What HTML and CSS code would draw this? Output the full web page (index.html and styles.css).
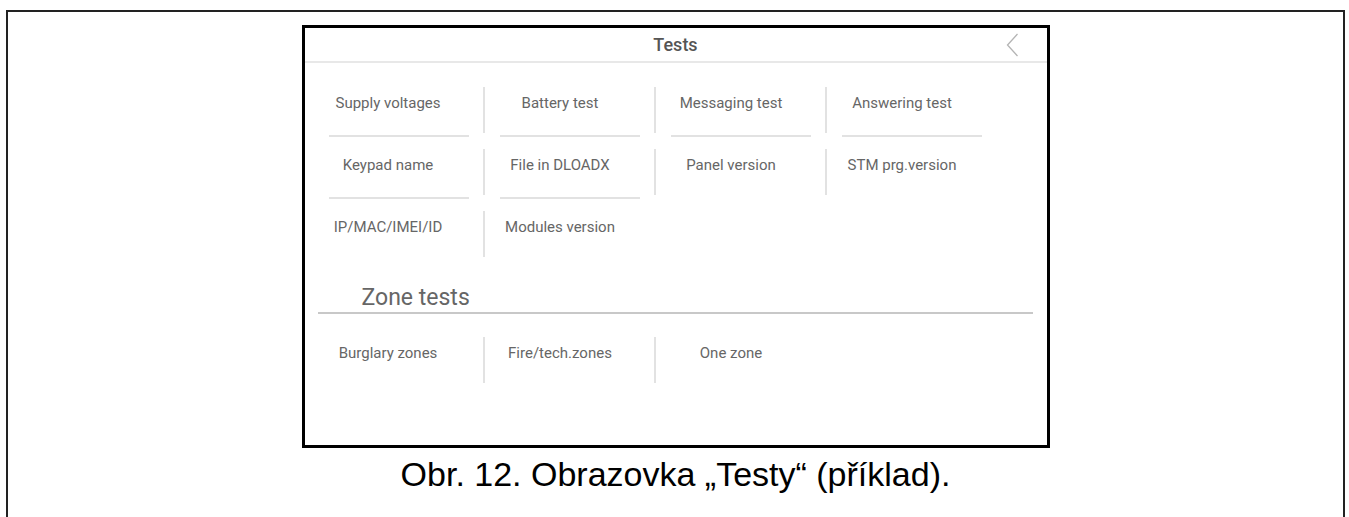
FILE: index.html
```html
<!DOCTYPE html>
<html lang="cs">

<head>
	<meta charset="UTF-8">
	<meta name="viewport" content="width=device-width, initial-scale=1.0">
	<title>Testy</title>
	<link rel="stylesheet" href="styles.css">
</head>

<body>
	<div class="page">
		<div class="screen">
			<div class="screen-head">
				<span class="title">Tests</span>
				<svg class="back" width="13" height="24" viewBox="0 0 13 24">
					<polyline points="11.5,1 1.5,12 11.5,23" fill="none" stroke="#b4b4b4" stroke-width="1.3" />
				</svg>
			</div>

			<div class="grid">
				<div class="cell"><div class="cell-body">Supply voltages</div><div class="cell-line"></div></div>
				<div class="cell"><div class="cell-body sep">Battery test</div><div class="cell-line"></div></div>
				<div class="cell"><div class="cell-body sep">Messaging test</div><div class="cell-line"></div></div>
				<div class="cell"><div class="cell-body sep">Answering test</div><div class="cell-line"></div></div>

				<div class="cell"><div class="cell-body">Keypad name</div><div class="cell-line"></div></div>
				<div class="cell"><div class="cell-body sep">File in DLOADX</div><div class="cell-line"></div></div>
				<div class="cell"><div class="cell-body sep">Panel version</div><div class="cell-line none"></div></div>
				<div class="cell"><div class="cell-body sep">STM prg.version</div><div class="cell-line none"></div></div>

				<div class="cell"><div class="cell-body">IP/MAC/IMEI/ID</div><div class="cell-line none"></div></div>
				<div class="cell"><div class="cell-body sep">Modules version</div><div class="cell-line none"></div></div>
			</div>

			<div class="section">Zone tests</div>

			<div class="grid zones">
				<div class="cell"><div class="cell-body">Burglary zones</div></div>
				<div class="cell"><div class="cell-body sep">Fire/tech.zones</div></div>
				<div class="cell"><div class="cell-body sep">One zone</div></div>
			</div>
		</div>

		<p class="caption">Obr. 12. Obrazovka „Testy“ (příklad).</p>
	</div>
</body>

</html>
```

FILE: styles.css
```css
body {
	margin: 0;
	background-color: white;
}

.page {
	box-sizing: border-box;
	margin: 10px 4px 0 6px;
	height: 507px;
	border: 2px solid #222;
	border-bottom: none;
}

.screen {
	box-sizing: border-box;
	width: 748px;
	height: 423px;
	margin: 13px auto 0;
	border: 3px solid black;
	font-family: Roboto, sans-serif;
	color: #666;
}

.screen-head {
	display: grid;
	grid-template-columns: 1fr auto 1fr;
	align-items: center;
	height: 33px;
	border-bottom: 2px solid #e8e8e8;
}

.title {
	grid-column: 2;
	font-size: 18px;
	font-weight: 500;
	color: #555;
}

.back {
	grid-column: 3;
	justify-self: end;
	margin-right: 28px;
}

.grid {
	display: grid;
	grid-template-columns: repeat(4, 171px);
	margin-top: 24px;
	padding-left: 7px;
}

.cell {
	height: 62px;
}

.cell-body {
	box-sizing: border-box;
	height: 46px;
	padding: 7px 18px 0 0;
	font-size: 15px;
	line-height: 18px;
	text-align: center;
}

.cell-body.sep {
	border-left: 2px solid #e2e2e2;
}

.cell-line {
	height: 2px;
	margin: 2px 14px 0 17px;
	background-color: #e2e2e2;
}

.cell-line.none {
	background-color: transparent;
}

.section {
	margin: 11px 14px 0 13px;
	padding-left: 44px;
	font-size: 23px;
	line-height: 28px;
	border-bottom: 2px solid #c8c8c8;
}

.zones {
	margin-top: 23px;
}

.caption {
	margin: 6px 0 0;
	font-family: "Liberation Sans", Arial, sans-serif;
	font-size: 34px;
	line-height: 40px;
	text-align: center;
	color: black;
}
```
